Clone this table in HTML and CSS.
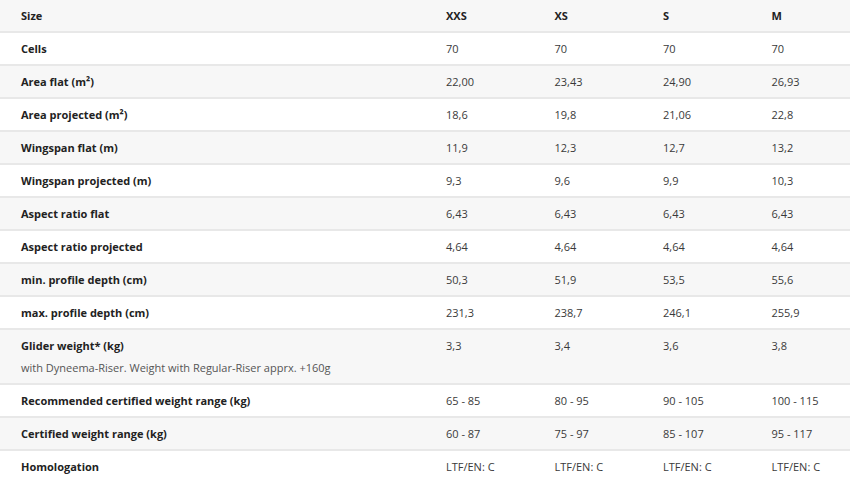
FILE: index.html
```html
<!DOCTYPE html>
<html>
<head>
<meta charset="utf-8">
<link rel="stylesheet" href="styles.css">
</head>
<body>
<table class="specs">
  <colgroup>
    <col class="c-label"><col class="c-val"><col class="c-val"><col class="c-val"><col class="c-last">
  </colgroup>
  <tbody>
    <tr class="odd"><th>Size</th><th>XXS</th><th>XS</th><th>S</th><th>M</th></tr>
    <tr><th>Cells</th><td>70</td><td>70</td><td>70</td><td>70</td></tr>
    <tr class="odd"><th>Area flat (m²)</th><td>22,00</td><td>23,43</td><td>24,90</td><td>26,93</td></tr>
    <tr><th>Area projected (m²)</th><td>18,6</td><td>19,8</td><td>21,06</td><td>22,8</td></tr>
    <tr class="odd"><th>Wingspan flat (m)</th><td>11,9</td><td>12,3</td><td>12,7</td><td>13,2</td></tr>
    <tr><th>Wingspan projected (m)</th><td>9,3</td><td>9,6</td><td>9,9</td><td>10,3</td></tr>
    <tr class="odd"><th>Aspect ratio flat</th><td>6,43</td><td>6,43</td><td>6,43</td><td>6,43</td></tr>
    <tr><th>Aspect ratio projected</th><td>4,64</td><td>4,64</td><td>4,64</td><td>4,64</td></tr>
    <tr class="odd"><th>min. profile depth (cm)</th><td>50,3</td><td>51,9</td><td>53,5</td><td>55,6</td></tr>
    <tr><th>max. profile depth (cm)</th><td>231,3</td><td>238,7</td><td>246,1</td><td>255,9</td></tr>
    <tr class="odd"><th>Glider weight* (kg)<span class="note">with Dyneema-Riser. Weight with Regular-Riser apprx. +160g</span></th><td>3,3</td><td>3,4</td><td>3,6</td><td>3,8</td></tr>
    <tr><th>Recommended certified weight range (kg)</th><td>65 - 85</td><td>80 - 95</td><td>90 - 105</td><td>100 - 115</td></tr>
    <tr class="odd"><th>Certified weight range (kg)</th><td>60 - 87</td><td>75 - 97</td><td>85 - 107</td><td>95 - 117</td></tr>
    <tr><th>Homologation</th><td>LTF/EN: C</td><td>LTF/EN: C</td><td>LTF/EN: C</td><td>LTF/EN: C</td></tr>
  </tbody>
</table>
</body>
</html>
```
FILE: styles.css
```css
html, body {
  margin: 0;
  padding: 0;
  background: #ffffff;
}
body {
  font-family: "Open Sans", "Liberation Sans", sans-serif;
  font-size: 11px;
  color: #333333;
}
.specs {
  width: 850px;
  border-collapse: collapse;
  table-layout: fixed;
}
.c-label { width: 425px; }
.c-val { width: 108.5px; }
.c-last { width: auto; }
.specs tr {
  border-bottom: 2px solid #e8e8e8;
}
.specs tr.odd {
  background: #f7f7f7;
}
.specs th,
.specs td {
  padding: 8px 0 8px 21px;
  line-height: 15px;
  text-align: left;
  vertical-align: top;
  white-space: nowrap;
}
.specs th {
  font-weight: 700;
  color: #222222;
}
.specs td {
  font-weight: 400;
  color: #3a3a3a;
}
.note {
  display: block;
  margin-top: 7px;
  font-weight: 400;
  color: #555555;
}
```
